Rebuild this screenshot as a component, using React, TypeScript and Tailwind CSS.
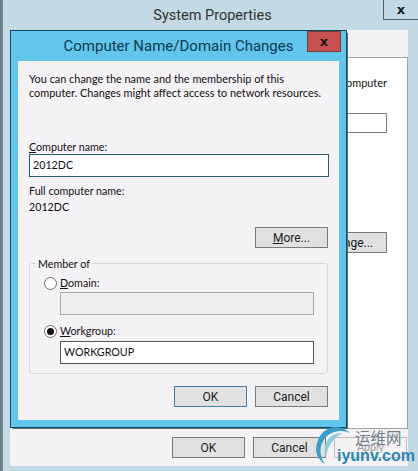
import React from 'react';

const font = { fontFamily: 'Lato, sans-serif' };
const ui = { fontFamily: 'Roboto, sans-serif' };

function WinButton({ label, hot, focus, className = '' }: { label: string; hot?: string; focus?: boolean; className?: string }) {
  const rest = hot ? label.slice(hot.length) : label;
  return (
    <div className={`w-[73px] h-[21px] flex items-center justify-center bg-[#e1e1e1] border text-[12px] text-[#222] ${focus ? 'border-[#3c7fb1]' : 'border-[#7a7a7a]'} ${className}`} style={ui}>
      <span>{hot && <span className="underline">{hot}</span>}{rest}</span>
    </div>
  );
}

function Radio({ checked }: { checked?: boolean }) {
  return (
    <div className="w-[13px] h-[13px] rounded-full border border-[#707070] bg-white flex items-center justify-center">
      {checked && <div className="w-[7px] h-[7px] rounded-full bg-[#111]" />}
    </div>
  );
}

function CloseGlyph() {
  return <span className="text-[13px] font-bold leading-none text-[#1a1a1a]" style={{ fontFamily: '"DejaVu Sans", sans-serif' }}>x</span>;
}

export default function App() {
  return (
    <div className="relative w-[418px] h-[471px] overflow-hidden bg-white text-[10.7px] text-[#111]" style={font}>
      {/* System Properties, behind */}
      <div className="absolute inset-0 bg-[#c3d9e3] border-l-[3px] border-[#6d7f88]">
        <div className="h-[30px] flex items-center justify-center pl-[4px] pt-[1px] text-[14.5px] text-[#333]" style={ui}>System Properties</div>
        <div className="absolute right-0 top-0 w-[35px] h-[20px] flex items-center justify-center bg-[#c3d9e3] border-l border-b border-[#4f5d65]"><CloseGlyph /></div>
        <div className="ml-[7px] mr-[10px] h-[436px] bg-[#f5f2f6] flex flex-col">
          <div className="mt-[27px] h-[372px] ml-[2px] border border-[#a0a0a0] bg-white relative">
            <div className="absolute left-[333px] top-[17px] leading-[16px] text-[10.9px]">omputer</div>
            <div className="absolute left-[333px] top-[55px] w-[41px] h-[20px] border border-[#7a7a7a]" />
            <div className="absolute left-[333px] top-[174px] w-[41px] h-[21px] bg-[#e1e1e1] border border-[#7a7a7a] flex items-center justify-end pr-[13px] text-[12px]" style={ui}>nge...</div>
          </div>
          <div className="mt-[8px] flex gap-[8px] pl-[162px]">
            <WinButton label="OK" />
            <WinButton label="Cancel" />
            <div className="w-[73px] h-[21px] flex items-center justify-center border border-[#bdbdbd] text-[#9a9a9a]">Apply</div>
          </div>
        </div>
      </div>

      {/* Computer Name/Domain Changes */}
      <div className="absolute left-[10px] top-[30px] w-[337px] h-[398px] bg-[#62c6ec] border border-[#0e4a60] shadow-[2px_2px_0_-1px_#5d6f78] flex flex-col">
        <div className="h-[30px] flex items-center justify-center pt-[1px] text-[15px] text-[#0f3a50]" style={ui}>Computer Name/Domain Changes</div>
        <div className="absolute right-[5px] top-0 w-[34px] h-[21px] flex items-center justify-center bg-[#c75050] border border-[#7c3a3a]"><CloseGlyph /></div>
        <div className="mx-[7px] h-[359px] bg-[#f5f2f6] px-[11px] flex flex-col">
          <p className="mt-[11px] leading-[14px] whitespace-nowrap text-[10.9px]">You can change the name and the membership of this<br />computer. Changes might affect access to network resources.</p>
          <div className="mt-[40px] leading-[14px]"><span className="underline">C</span>omputer name:</div>
          <div className="h-[23px] border border-[#2f5a6c] bg-white flex items-center pl-[3px] w-[300px]">2012DC</div>
          <div className="mt-[7px] leading-[14px]">Full computer name:</div>
          <div className="mt-[2px] leading-[14px]">2012DC</div>
          <div className="mt-[13px] flex justify-end"><WinButton label="More..." hot="M" /></div>

          <div className="relative mt-[15px] w-[299px] h-[111px] border border-[#d9d6da] rounded-[3px] pl-[14px]">
            <div className="absolute left-[6px] top-[-7px] px-[2px] leading-[14px] bg-[#f5f2f6]">Member of</div>
            <div className="flex items-center gap-[3px] h-[14px] mt-[12px]"><Radio /><div><span className="underline">D</span>omain:</div></div>
            <div className="ml-[16px] mt-[2px] w-[254px] h-[23px] border border-[#a9a9a9] bg-[#f0eef1]" />
            <div className="flex items-center gap-[3px] h-[14px] mt-[9px]"><Radio checked /><div><span className="underline">W</span>orkgroup:</div></div>
            <div className="ml-[16px] mt-[3px] w-[254px] h-[23px] border border-[#555] bg-white flex items-center pl-[3px]">WORKGROUP</div>
          </div>

          <div className="mt-[12px] flex justify-end gap-[8px]">
            <WinButton label="OK" focus />
            <WinButton label="Cancel" />
          </div>
        </div>
      </div>

      {/* iyunv watermark */}
      <svg className="absolute left-[310px] top-[420px]" width="50" height="51" viewBox="0 0 50 51" fill="none">
        <path d="M40 13 C30 3 12 5 7 23 C4 34 9 40 15 44 C9 36 9 26 15 18 C21 11 32 9 40 13 Z" fill="#3a9cc8" />
        <path d="M33 13 C24 12 17 18 15 26 C14 30 15 34 16 38 C17 28 22 18 33 13 Z" fill="#8ccbe4" />
      </svg>
      <div className="absolute left-[355px] top-[427px] leading-[20px] text-[15.5px] text-[#6d7f88]" style={{ fontFamily: '"Noto Sans CJK SC", sans-serif' }}>运维网</div>
      <div className="absolute left-[337px] top-[445px] leading-[22px] text-[16px] font-bold text-[#2a86b4]" style={{ fontFamily: '"Liberation Sans", sans-serif' }}>iyunv.com</div>
    </div>
  );
}
